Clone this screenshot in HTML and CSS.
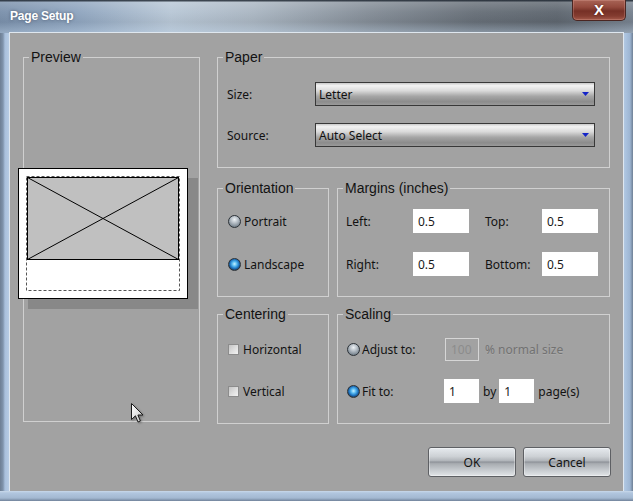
FILE: index.html
```html
<!DOCTYPE html>
<html>
<head>
<meta charset="utf-8">
<title>Page Setup</title>
<link rel="stylesheet" href="styles.css">
</head>
<body>
<div class="window">
  <div class="titlebar">
    <span class="title">Page Setup</span>
    <div class="close">X</div>
  </div>
  <div class="client">
    <div class="main">
      <div class="group preview">
        <span class="glabel">Preview</span>
        <div class="page">
          <svg width="168" height="129" viewBox="0 0 168 129">
            <rect x="8.5" y="8.5" width="151" height="82" fill="#c0c0c0" stroke="#000" stroke-width="1"/>
            <line x1="8.5" y1="8.5" x2="159.5" y2="90.5" stroke="#000" stroke-width="1"/>
            <line x1="159.5" y1="8.5" x2="8.5" y2="90.5" stroke="#000" stroke-width="1"/>
            <rect x="7.5" y="7.5" width="153" height="114" fill="none" stroke="#555" stroke-width="1" stroke-dasharray="3 2"/>
          </svg>
        </div>
      </div>
      <div class="rightcol">
        <div class="group paper">
          <span class="glabel">Paper</span>
          <div class="prow">
            <span class="plabel">Size:</span>
            <div class="select"><span class="txt">Letter</span><svg class="arrow" width="7" height="4" viewBox="0 0 7 4"><path d="M0 0H7L3.5 4Z" fill="#1424c8"/></svg></div>
          </div>
          <div class="prow">
            <span class="plabel">Source:</span>
            <div class="select"><span class="txt">Auto Select</span><svg class="arrow" width="7" height="4" viewBox="0 0 7 4"><path d="M0 0H7L3.5 4Z" fill="#1424c8"/></svg></div>
          </div>
        </div>
        <div class="row2 mid">
          <div class="group narrow orient">
            <span class="glabel">Orientation</span>
            <div class="opt"><span class="radio"></span><span class="txt">Portrait</span></div>
            <div class="opt"><span class="radio on"></span><span class="txt">Landscape</span></div>
          </div>
          <div class="group wide margins">
            <span class="glabel">Margins (inches)</span>
            <div class="mgrid">
              <span class="mlabel txt">Left:</span><div class="field">0.5</div>
              <span class="mlabel txt second">Top:</span><div class="field">0.5</div>
              <span class="mlabel txt">Right:</span><div class="field">0.5</div>
              <span class="mlabel txt second">Bottom:</span><div class="field">0.5</div>
            </div>
          </div>
        </div>
        <div class="row2 bot">
          <div class="group narrow centering">
            <span class="glabel">Centering</span>
            <div class="opt"><span class="check"></span><span class="txt">Horizontal</span></div>
            <div class="opt"><span class="check"></span><span class="txt">Vertical</span></div>
          </div>
          <div class="group wide scaling">
            <span class="glabel">Scaling</span>
            <div class="srow">
              <div class="sopt"><span class="radio"></span><span class="txt">Adjust to:</span></div>
              <div class="field small disabled">100</div>
              <span class="dimtext txt">% normal size</span>
            </div>
            <div class="srow">
              <div class="sopt"><span class="radio on"></span><span class="txt">Fit to:</span></div>
              <div class="field small">1</div>
              <span class="by txt">by</span>
              <div class="field small">1</div>
              <span class="pages txt">page(s)</span>
            </div>
          </div>
        </div>
      </div>
    </div>
    <div class="buttons">
      <div class="btn">OK</div>
      <div class="btn">Cancel</div>
    </div>
  </div>
  <div class="bottomframe"></div>
  <svg class="cursor" width="14" height="21" viewBox="0 0 14 21">
    <defs>
      <linearGradient id="cg" x1="0" y1="0" x2="1" y2="1">
        <stop offset="0" stop-color="#ffffff"/>
        <stop offset="1" stop-color="#c4c4c4"/>
      </linearGradient>
    </defs>
    <path d="M0.5 0.5 L0.5 16.5 L4.4 12.8 L7 19 L9.4 18 L6.9 12 L12 12 Z" fill="url(#cg)" stroke="#1a1a1a" stroke-width="1" stroke-linejoin="round"/>
  </svg>
</div>
</body>
</html>
```

FILE: styles.css
```css
html, body {
  margin: 0;
  padding: 0;
  background: #8a9cb2;
}

.window {
  position: relative;
  width: 633px;
  height: 501px;
  overflow: hidden;
  background: linear-gradient(to right, #6d7e93 0, #7f93ab 3px, #a9c0dc 5px, #b6cbe3 9px, #b6cbe3 623px, #aac2de 626px, #9db5d2 630px, #6f8095 633px);
  font-family: "Noto Sans", "Open Sans", sans-serif;
  font-size: 12px;
  color: #121212;
}

.titlebar {
  height: 33px;
  display: flex;
  justify-content: space-between;
  align-items: flex-start;
  background:
    linear-gradient(to bottom, rgba(40,48,58,0.85) 0, rgba(40,48,58,0.85) 1px, rgba(255,255,255,0.18) 2px, rgba(255,255,255,0.04) 12px, rgba(0,0,0,0.04) 22px, rgba(190,210,230,0.4) 33px),
    linear-gradient(to right, #7a90ab 0%, #8ea4be 12%, #b8c7d6 27%, #aab6c2 40%, #848d97 58%, #676f78 75%, #5e666f 88%, #77828f 100%);
}

.title {
  margin: 9px 0 0 10px;
  font-family: "Liberation Sans", Arial, sans-serif;
  font-weight: bold;
  font-size: 12px;
  line-height: 14px;
  color: #ffffff;
  text-shadow: 0 0 3px rgba(40,50,70,0.6);
  letter-spacing: -0.2px;
}

.close {
  width: 54px;
  height: 21px;
  margin: 0 7px 0 0;
  box-sizing: border-box;
  border: 1px solid #4a2622;
  border-top: none;
  border-radius: 0 0 5px 5px;
  background: linear-gradient(to bottom, #a86456 0%, #944a3e 35%, #763026 55%, #843c30 80%, #a45a4a 100%);
  box-shadow: inset 0 0 0 1px rgba(255,200,190,0.22);
  color: #ffffff;
  font-family: "Liberation Sans", Arial, sans-serif;
  font-weight: bold;
  font-size: 15px;
  line-height: 19px;
  text-align: center;
  text-shadow: 0 0 2px rgba(60,10,0,0.7);
}

.client {
  margin: 0 10px;
  width: 613px;
  height: 458px;
  box-sizing: border-box;
  padding: 24px 0 0 13px;
  background: #a2a2a2;
  box-shadow: 0 0 0 1px #dfe7ef;
}

.bottomframe {
  height: 10px;
  background: linear-gradient(to bottom, #c9d9ea 0, #b1c6de 2px, #a3b8d1 7px, #71839a 10px);
}

.main {
  display: flex;
  align-items: flex-start;
  gap: 17px;
  height: 367px;
}

.group {
  position: relative;
  box-sizing: border-box;
  border: 1px solid #d0d0d0;
}

.glabel {
  position: absolute;
  top: -9px;
  left: 5px;
  padding: 0 2px;
  background: #a2a2a2;
  font-family: "Liberation Sans", Arial, sans-serif;
  font-size: 14px;
  line-height: 16px;
  color: #121212;
  white-space: nowrap;
}

.txt {
  padding-top: 2px;
  line-height: 16px;
}

.preview {
  width: 177px;
  height: 365px;
  padding-top: 110px;
}

.page {
  width: 170px;
  height: 131px;
  margin-left: -6px;
  box-sizing: border-box;
  border: 1px solid #000;
  background: #ffffff;
  box-shadow: 10px 10px 0 #888888;
}

.page svg {
  display: block;
}

.rightcol {
  width: 393px;
  display: flex;
  flex-direction: column;
}

.paper {
  height: 111px;
  padding: 24px 0 0 9px;
  display: flex;
  flex-direction: column;
  gap: 17px;
}

.prow {
  display: flex;
  align-items: center;
  height: 24px;
}

.plabel {
  width: 88px;
  padding-top: 2px;
  line-height: 16px;
}

.select {
  width: 280px;
  height: 24px;
  box-sizing: border-box;
  border: 1px solid #383838;
  display: flex;
  align-items: center;
  padding: 0 3px 0 3px;
  background: linear-gradient(to bottom, #c8c8c8 0%, #f2f2f2 12%, #dadada 35%, #a6a6a6 60%, #8c8c8c 85%, #9a9a9a 100%);
  color: #111;
}

.select .arrow {
  margin-left: auto;
  margin-right: 2px;
}

.row2 {
  display: flex;
  gap: 8px;
}

.row2.mid {
  margin-top: 20px;
  height: 109px;
}

.row2.bot {
  margin-top: 17px;
  height: 110px;
}

.narrow {
  width: 112px;
}

.wide {
  width: 273px;
}

.orient {
  padding: 20px 0 0 10px;
  display: flex;
  flex-direction: column;
  gap: 19px;
}

.opt {
  display: flex;
  align-items: center;
  height: 24px;
  gap: 3px;
}

.radio {
  display: inline-block;
  flex: none;
  width: 13px;
  height: 13px;
  box-sizing: border-box;
  border-radius: 50%;
  border: 1px solid #2c3238;
  background: radial-gradient(circle at 50% 32%, #eef2f5 0, #b6bec6 38%, #7c8892 75%, #4e5860 100%);
}

.radio.on {
  background: radial-gradient(circle at 50% 45%, #c8f2ff 0, #52b6f0 30%, #1a6cb8 58%, #26323e 82%, #1e1e1e 100%);
}

.check {
  display: inline-block;
  flex: none;
  width: 11px;
  height: 11px;
  box-sizing: border-box;
  border: 1px solid #8c8c8c;
  background: linear-gradient(135deg, #c4c4c4 0%, #e2e2e2 60%, #f2f2f2 100%);
  margin-right: 1px;
}

.margins {
  padding: 20px 0 0 8px;
}

.mgrid {
  display: grid;
  grid-template-columns: 67px 56px 73px 56px;
  grid-auto-rows: 24px;
  row-gap: 19px;
  align-items: center;
}

.mlabel.second {
  padding-left: 16px;
}

.field {
  height: 24px;
  box-sizing: border-box;
  background: #ffffff;
  padding: 1px 5px 0;
  line-height: 23px;
  color: #1a1a1a;
}

.centering {
  padding: 22px 0 0 10px;
  display: flex;
  flex-direction: column;
  gap: 18px;
}

.scaling {
  padding: 22px 0 0 9px;
  display: flex;
  flex-direction: column;
  gap: 18px;
}

.srow {
  display: flex;
  align-items: center;
  height: 24px;
}

.sopt {
  width: 97px;
  display: flex;
  align-items: center;
  gap: 2px;
}

.field.small {
  width: 35px;
}

.field.disabled {
  width: 34px;
  height: 23px;
  margin-left: 1px;
  background: transparent;
  border: 1px solid #d6d6d6;
  padding: 0 5px;
  line-height: 21px;
  color: #8c8c8c;
}

.dimtext {
  margin-left: 6px;
  color: #727272;
  text-shadow: 0 1px 0 rgba(255,255,255,0.12);
}

.by {
  margin: 0 3px 0 4px;
}

.pages {
  margin-left: 4px;
}

.buttons {
  display: flex;
  justify-content: flex-end;
  gap: 7px;
  margin-top: 23px;
  padding-right: 12px;
}

.btn {
  width: 88px;
  height: 30px;
  box-sizing: border-box;
  border: 1px solid #5e6064;
  border-radius: 3px;
  background: linear-gradient(to bottom, #e6eaee 0%, #cdd1d5 30%, #b0b4b9 46%, #8e9298 50%, #a8acb1 56%, #c8ccd0 80%, #e2e5e8 100%);
  box-shadow: inset 0 0 0 1px rgba(255,255,255,0.35);
  text-align: center;
  padding-top: 1px;
  line-height: 27px;
  color: #141414;
}

.cursor {
  position: absolute;
  left: 131px;
  top: 403px;
  filter: drop-shadow(1px 1px 1px rgba(0,0,0,0.35));
}
```
